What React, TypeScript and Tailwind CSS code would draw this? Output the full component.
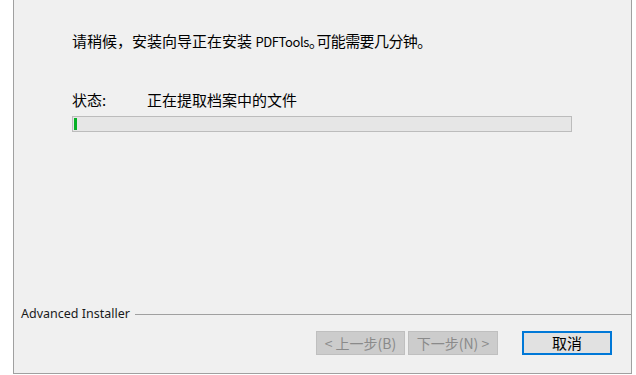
import React from 'react';

const cjk = { fontFamily: '"Noto Sans CJK SC", "Noto Sans", sans-serif' };

const App = () => {
  return (
    <div className="w-[636px] h-[375px] bg-white overflow-hidden" style={cjk}>
      <div className="ml-[13px] w-[619px] h-[374px] bg-[#f0f0f0] border-l border-r border-b border-[#a0a0a0] flex flex-col">
        {/* message */}
        <div className="pl-[58px] pt-[31px] text-[15px] leading-[20px] text-black whitespace-nowrap">
          请稍候，安装向导正在安装 <span className="text-[13px] tracking-[-0.4px]">PDFTools</span>
          <span>｡</span>
          <span className="tracking-[-0.6px]">可能需要几分钟</span>
          <span>｡</span>
        </div>

        {/* status */}
        <div className="pl-[58px] mt-[38px] flex text-[15px] leading-[20px] text-black">
          <span className="w-[75px]">状态:</span>
          <span>正在提取档案中的文件</span>
        </div>
        <div className="ml-[58px] mt-[6px] w-[500px] h-[16px] border border-[#bcbcbc] bg-[#e6e6e6] p-[1px] flex">
          <div className="w-[3px] h-full bg-[#06b025]" />
        </div>

        <div className="flex-1" />

        {/* footer */}
        <div className="flex items-center h-[18px] pl-[7px]">
          <span className="text-[12.5px] leading-[18px] text-[#1a1a1a] pr-[5px]" style={{ fontFamily: '"Noto Sans", sans-serif' }}>
            Advanced Installer
          </span>
          <div className="flex-1 h-[1px] bg-[#a0a0a0]" />
        </div>
        <div className="flex justify-end pr-[19px] mt-[8px] mb-[18px]">
          <button className="w-[89px] h-[24px] bg-[#cccccc] border border-[#bfbfbf] text-[14px] leading-[20px] text-[#8a8a8a]">
            &lt; 上一步(B)
          </button>
          <button className="ml-[3px] w-[90px] h-[24px] bg-[#cccccc] border border-[#bfbfbf] text-[14px] leading-[20px] text-[#8a8a8a]">
            下一步(N) &gt;
          </button>
          <button className="ml-[24px] w-[90px] h-[24px] bg-[#e1e1e1] border-2 border-[#0078d7] text-[15px] leading-[20px] text-black">
            取消
          </button>
        </div>
      </div>
    </div>
  );
};

export default App;
